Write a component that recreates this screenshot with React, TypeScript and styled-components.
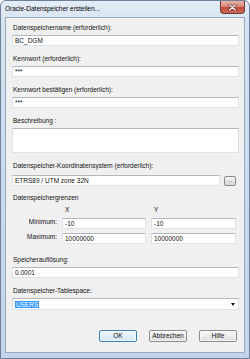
import styled, { createGlobalStyle } from "styled-components";

const GlobalStyle = createGlobalStyle`
  html, body {
    margin: 0;
    padding: 0;
    width: 250px;
    height: 359px;
    overflow: hidden;
    background: #ffffff;
  }
  * {
    box-sizing: border-box;
  }
`;

const App = () => {
  return (
    <>
      <GlobalStyle />
      <Window>
        <TitleBar>
          <Title>Oracle-Datenspeicher erstellen...</Title>
          <CloseButton aria-label="Schließen">
            <svg width="9" height="7" viewBox="0 0 9 7">
              <path
                d="M1.5 1 L7.5 6 M7.5 1 L1.5 6"
                stroke="#5a1f18"
                strokeWidth="2.6"
                strokeLinecap="round"
              />
              <path
                d="M1.5 1 L7.5 6 M7.5 1 L1.5 6"
                stroke="#ffffff"
                strokeWidth="1.4"
                strokeLinecap="round"
              />
            </svg>
          </CloseButton>
        </TitleBar>
        <Client>
          <Form>
            <Field>
              <Label>Datenspeichername (erforderlich):</Label>
              <TextBox>BC_DGM</TextBox>
            </Field>
            <Field>
              <Label>Kennwort (erforderlich):</Label>
              <TextBox>***</TextBox>
            </Field>
            <Field>
              <Label>Kennwort bestätigen (erforderlich):</Label>
              <TextBox>***</TextBox>
            </Field>
            <Field>
              <Label>Beschreibung :</Label>
              <TextBox $tall />
            </Field>
            <Field $gap={5}>
              <Label>Datenspeicher-Koordinatensystem (erforderlich):</Label>
              <InlineRow>
                <TextBox>ETRS89 / UTM zone 32N</TextBox>
                <SmallButton>...</SmallButton>
              </InlineRow>
            </Field>
            <Extents>
              <Label>Datenspeichergrenzen</Label>
              <ExtentGrid>
                <span />
                <AxisLabel>X</AxisLabel>
                <AxisLabel>Y</AxisLabel>
                <RowLabel>Minimum:</RowLabel>
                <TextBox>-10</TextBox>
                <TextBox>-10</TextBox>
                <RowLabel>Maximum:</RowLabel>
                <TextBox>10000000</TextBox>
                <TextBox>10000000</TextBox>
              </ExtentGrid>
            </Extents>
            <Field>
              <Label>Speicherauflösung:</Label>
              <TextBox>0.0001</TextBox>
            </Field>
            <Field>
              <Label>Datenspeicher-Tablespace:</Label>
              <Combo>
                <Selected>USERS</Selected>
                <Arrow />
              </Combo>
            </Field>
          </Form>
          <ButtonRow>
            <DialogButton $primary>OK</DialogButton>
            <DialogButton>Abbrechen</DialogButton>
            <DialogButton>Hilfe</DialogButton>
          </ButtonRow>
        </Client>
      </Window>
    </>
  );
};

export default App;

const Window = styled.div`
  width: 250px;
  height: 359px;
  display: flex;
  flex-direction: column;
  padding: 0 4px 5px 4px;
  border: 1px solid #6f8198;
  border-radius: 6px 6px 0 0;
  background: linear-gradient(
    180deg,
    #e4edf7 0%,
    #d6e3f1 6%,
    #cddcee 40%,
    #c3d5ea 100%
  );
  font-family: "Liberation Sans", Arial, sans-serif;
  color: #111;
`;

const TitleBar = styled.div`
  height: 16px;
  display: flex;
  justify-content: space-between;
  align-items: flex-start;
  flex-shrink: 0;
`;

const Title = styled.div`
  font-size: 6.5px;
  line-height: 8px;
  padding: 4px 0 0 0;
  color: #000;
  white-space: nowrap;
`;

const CloseButton = styled.div`
  width: 25px;
  height: 13px;
  display: flex;
  align-items: center;
  justify-content: center;
  border: 1px solid #6a3b35;
  border-top: none;
  border-radius: 0 0 4px 4px;
  background: linear-gradient(
    180deg,
    #e8b0a6 0%,
    #d98a7e 45%,
    #c4493b 55%,
    #cf6a57 100%
  );
`;

const Client = styled.div`
  flex: 1;
  display: flex;
  flex-direction: column;
  justify-content: space-between;
  padding: 6px 5px 10px 6px;
  border: 1px solid #98aac0;
  background: #f0f0f0;
`;

const Form = styled.div`
  display: flex;
  flex-direction: column;
  gap: 9px;
`;

const Field = styled.div<{ $gap?: number }>`
  display: flex;
  flex-direction: column;
  gap: ${({ $gap }) => $gap ?? 3}px;
`;

const Label = styled.div`
  font-size: 6.5px;
  line-height: 8px;
  padding-left: 1px;
  white-space: nowrap;
`;

const TextBox = styled.div<{ $tall?: boolean }>`
  width: 100%;
  min-width: 0;
  flex-shrink: 1;
  height: ${({ $tall }) => ($tall ? 25 : 11)}px;
  padding: 0 2px;
  border: 1px solid #dde2e8;
  border-top-color: #b3b8bf;
  background: #ffffff;
  font-size: 6.5px;
  line-height: 9px;
  color: #111;
  white-space: nowrap;
  overflow: hidden;
`;

const InlineRow = styled.div`
  display: flex;
  align-items: center;
  gap: 4px;
  padding-right: 3px;
`;

const SmallButton = styled.div`
  flex-shrink: 0;
  width: 12px;
  height: 10px;
  display: flex;
  align-items: center;
  justify-content: center;
  border: 1px solid #8a8a8a;
  border-radius: 2px;
  background: linear-gradient(180deg, #f4f4f4 0%, #e6e6e6 50%, #d6d6d6 100%);
  font-size: 5px;
  line-height: 5px;
  color: #333;
`;

const Extents = styled.div`
  display: flex;
  flex-direction: column;
  gap: 4px;
  margin-top: -1px;
  margin-bottom: 3px;
`;

const ExtentGrid = styled.div`
  display: grid;
  grid-template-columns: 45px 84px 85px;
  column-gap: 5px;
  row-gap: 4px;
  align-items: start;
`;

const AxisLabel = styled.div`
  font-size: 6.5px;
  line-height: 8px;
  padding-left: 3px;
`;

const RowLabel = styled.div`
  font-size: 6.5px;
  line-height: 8px;
  text-align: right;
  white-space: nowrap;
`;

const Combo = styled.div`
  height: 12px;
  display: flex;
  align-items: center;
  justify-content: space-between;
  padding: 0 3px 0 2px;
  border: 1px solid #dde2e8;
  border-top-color: #b3b8bf;
  background: #ffffff;
`;

const Selected = styled.span`
  font-size: 6.5px;
  line-height: 7px;
  padding: 0 1px;
  background: #3399ff;
  color: #ffffff;
`;

const Arrow = styled.span`
  width: 0;
  height: 0;
  border-left: 2.5px solid transparent;
  border-right: 2.5px solid transparent;
  border-top: 3px solid #111;
`;

const ButtonRow = styled.div`
  display: flex;
  justify-content: flex-end;
  gap: 12px;
  padding-right: 2px;
`;

const DialogButton = styled.div<{ $primary?: boolean }>`
  width: 38px;
  height: 12px;
  display: flex;
  align-items: center;
  justify-content: center;
  border: 1px solid ${({ $primary }) => ($primary ? "#3c7fb1" : "#8a8a8a")};
  border-radius: 2px;
  background: ${({ $primary }) =>
    $primary
      ? "linear-gradient(180deg, #eef7fd 0%, #e2f0fb 50%, #cfe6f8 100%)"
      : "linear-gradient(180deg, #f5f5f5 0%, #ececec 50%, #dcdcdc 100%)"};
  box-shadow: inset 0 0 0 1px rgba(255, 255, 255, 0.7);
  font-size: 6.5px;
  line-height: 8px;
  color: #111;
`;
